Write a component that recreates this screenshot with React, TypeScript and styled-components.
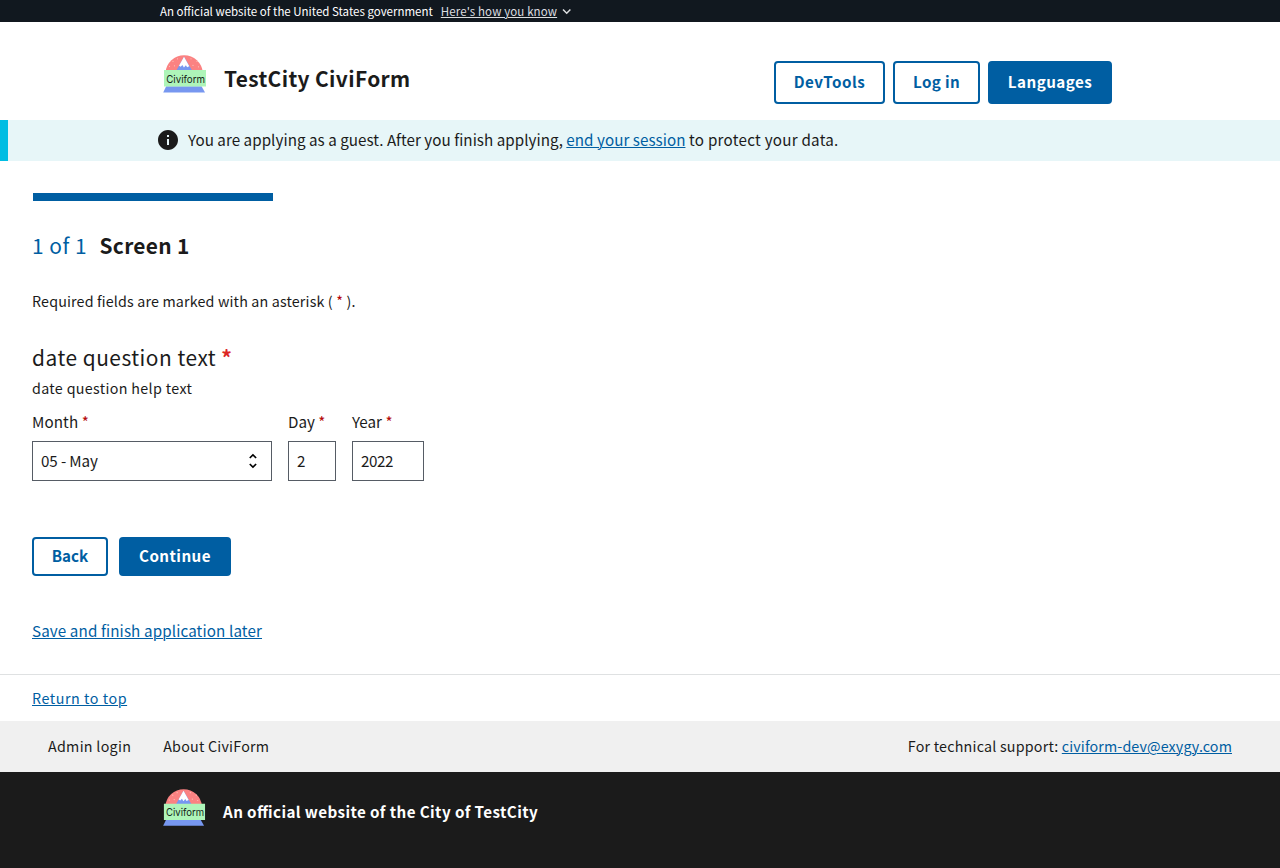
import React from "react";
import styled, { createGlobalStyle } from "styled-components";

const colors = {
  ink: "#1b1b1b",
  primary: "#005ea2",
  banner: "#11181f",
  info: "#e7f6f8",
  infoBar: "#00bde3",
  required: "#b50909",
  requiredBright: "#dc2626",
  inputBorder: "#565c65",
};

const GlobalStyle = createGlobalStyle`
  *, *::before, *::after { box-sizing: border-box; }
  body {
    margin: 0;
    background: #fff;
    color: ${colors.ink};
    font-family: "Noto Sans CJK SC", "Noto Sans", sans-serif;
    font-size: 15.2px;
    line-height: 20px;
    font-feature-settings: "liga" 1;
  }
  a { color: ${colors.primary}; text-underline-offset: 1px; text-decoration-thickness: 1px; }
`;

const Page = styled.div`
  display: flex;
  flex-direction: column;
  min-height: 868px;
`;

const Phrase = styled.span<{ $size?: number; $spacing?: number; $bold?: boolean }>`
  display: inline-block;
  vertical-align: top;
  font-size: ${(p) => p.$size ?? 15.2}px;
  letter-spacing: ${(p) => p.$spacing ?? 0}px;
  font-weight: ${(p) => (p.$bold ? 700 : 400)};
  white-space: pre;
`;

const Tracked = styled.span<{ $spacing: number }>`
  letter-spacing: ${(p) => p.$spacing}px;
`;

const GovBanner = styled.div`
  display: flex;
  align-items: center;
  gap: 8px;
  height: 22px;
  padding: 0 0 1px 160px;
  background: ${colors.banner};
  color: #fff;
`;

const BannerToggle = styled.span`
  display: flex;
  align-items: center;
  gap: 4px;
  color: #dcdee0;
  u { text-underline-offset: 1px; text-decoration-thickness: 1px; }
  svg { margin-top: 2px; }
`;

const Header = styled.header`
  display: flex;
  height: 98px;
  padding: 32px 168px 0 160px;
`;

const Brand = styled.div`
  display: flex;
  gap: 16px;
  flex: 1;
`;

const SiteTitle = styled.div`
  padding-top: 9px;
  line-height: 30px;
`;

const HeaderNav = styled.nav`
  display: flex;
  gap: 8px;
  padding-top: 7px;
`;

const Button = styled.button<{ $filled?: boolean; $width: number; $height: number }>`
  width: ${(p) => p.$width}px;
  height: ${(p) => p.$height}px;
  padding: 0 0 3px;
  border: 2px solid ${colors.primary};
  border-radius: 4px;
  background: ${(p) => (p.$filled ? colors.primary : "#fff")};
  color: ${(p) => (p.$filled ? "#fff" : colors.primary)};
  font-family: inherit;
  line-height: 20px;
`;

const Alert = styled.div`
  display: flex;
  align-items: center;
  gap: 8px;
  height: 41px;
  padding: 0 0 1px 148px;
  border-left: 8px solid ${colors.infoBar};
  background: ${colors.info};
`;

const AlertText = styled.div`
  margin-bottom: 2px;
`;

const Main = styled.main`
  height: 513px;
  padding: 32px 32px 0;
`;

const Progress = styled.div`
  width: 240px;
  height: 8px;
  margin-left: 1px;
  background: ${colors.primary};
`;

const StepHeading = styled.h1`
  display: flex;
  gap: 12.5px;
  margin: 29px 0 0;
  line-height: 30px;
`;

const StepCount = styled.span`
  color: ${colors.primary};
`;

const Note = styled.p`
  margin: 31px 0 0;
`;

const Star = styled.span<{ $bright?: boolean; $bold?: boolean }>`
  color: ${(p) => (p.$bright ? colors.requiredBright : colors.required)};
  font-weight: ${(p) => (p.$bold ? 700 : 400)};
`;

const Question = styled.h2`
  margin: 31px 0 0;
  line-height: 30px;
  font-weight: 400;
`;

const Help = styled.p`
  margin: 6px 0 0;
`;

const DateRow = styled.div`
  display: flex;
  gap: 16px;
  margin-top: 13px;
`;

const Field = styled.label<{ $width: number }>`
  display: flex;
  flex-direction: column;
  gap: 10px;
  width: ${(p) => p.$width}px;
`;

const Control = styled.span`
  display: flex;
  align-items: flex-start;
  justify-content: space-between;
  height: 40px;
  padding: 8px 6px 0 8px;
  border: 1px solid ${colors.inputBorder};
  svg { margin-top: 1px; }
`;

const Actions = styled.div`
  display: flex;
  gap: 11px;
  margin: 56px 0 44px;
`;

const TopLink = styled.div`
  height: 47px;
  padding: 13px 32px 0;
  border-top: 1px solid #dfe1e2;
`;

const FooterNav = styled.nav`
  display: flex;
  gap: 32px;
  height: 51px;
  padding: 15px 48px 0;
  background: #f0f0f0;
`;

const Support = styled.div`
  margin-left: auto;
`;

const Identifier = styled.footer`
  display: flex;
  gap: 16px;
  flex: 1;
  padding: 16px 0 0 160px;
  background: ${colors.ink};
  color: #fff;
`;

const IdentifierText = styled.div`
  padding-top: 13px;
`;

function Logo({ size }: { size: number }) {
  return (
    <svg width={size} height={size} viewBox="0 0.700 48 48" aria-hidden="true">
      <path d="M5.500 19.200a18.700 18.700 0 0 1 37.300 0z" fill="#fb8282" />
      <g fill="#fbc5ba">
        <circle cx="9.500" cy="13" r=".6" />
        <circle cx="13" cy="8" r=".6" />
        <circle cx="17.500" cy="5.500" r=".6" />
        <circle cx="14.500" cy="12.500" r=".6" />
        <circle cx="31" cy="5.500" r=".6" />
        <circle cx="33" cy="12" r=".6" />
        <circle cx="37" cy="8" r=".6" />
        <circle cx="38.500" cy="13.500" r=".6" />
      </g>
      <path d="M24 3.400 32 17H16.500z" fill="#7797f0" />
      <path d="M24 3.400 19 12.500l1.700 1 1.700-1.700 1.500 2.400 2-2.300 1.200 2 2.200-1z" fill="#fff" />
      <path d="M6.200 33h35.300l3.500 6.200H3.200z" fill="#7797f0" />
      <path d="M4 16.700h42v16.600H4z" fill="#aef5b9" />
      <text
        x="6.200"
        y="29.400"
        fontFamily="Inter, sans-serif"
        fontSize="10.800"
        textLength="38.800"
        lengthAdjust="spacingAndGlyphs"
        fill="#17251b"
      >
        Civiform
      </text>
    </svg>
  );
}

function InfoIcon() {
  return (
    <svg width="24" height="24" viewBox="0 0 24 24" fill={colors.ink} aria-hidden="true">
      <path d="M12 2C6.48 2 2 6.48 2 12s4.48 10 10 10 10-4.48 10-10S17.52 2 12 2zm1 15h-2v-6h2v6zm0-8h-2V7h2v2z" />
    </svg>
  );
}

function ChevronDown() {
  return (
    <svg width="11" height="11" viewBox="0 0 11 11" aria-hidden="true">
      <path d="M2 3.500 5.700 7.200 9.400 3.500" fill="none" stroke="#dcdee0" strokeWidth="1.500" />
    </svg>
  );
}

function UnfoldIcon() {
  return (
    <svg width="24" height="20" viewBox="0 2 24 20" aria-hidden="true">
      <path
        d="M12 5.830 15.170 9l1.410-1.410L12 3 7.410 7.590 8.830 9 12 5.830zm0 12.340L8.830 15l-1.410 1.410L12 21l4.590-4.590L15.170 15 12 18.170z"
        transform="translate(2.100 2.400) scale(.82 .8)"
      />
    </svg>
  );
}

export default function App() {
  return (
    <Page>
      <GlobalStyle />
      <GovBanner>
        <Phrase $size={11.5}>An official website of the United States government</Phrase>
        <BannerToggle>
          <Phrase $size={11.5} $spacing={0.12}><u>Here's how you know</u></Phrase>
          <ChevronDown />
        </BannerToggle>
      </GovBanner>
      <Header>
        <Brand>
          <Logo size={48} />
          <SiteTitle><Phrase $size={20.9} $spacing={0.37} $bold>TestCity CiviForm</Phrase></SiteTitle>
        </Brand>
        <HeaderNav>
          <Button $width={111} $height={43}><Phrase $spacing={0.5} $bold>DevTools</Phrase></Button>
          <Button $width={87} $height={43}><Phrase $spacing={0.35} $bold>Log in</Phrase></Button>
          <Button $width={124} $height={43} $filled><Phrase $spacing={0.45} $bold>Languages</Phrase></Button>
        </HeaderNav>
      </Header>
      <Alert>
        <InfoIcon />
        <AlertText>
          <Phrase $spacing={0.04}>
            You are applying as a guest. After you finish applying, <a href="#end">end your session</a>
            <Tracked $spacing={0.25}> to protect your data.</Tracked>
          </Phrase>
        </AlertText>
      </Alert>
      <Main>
        <Progress />
        <StepHeading>
          <StepCount><Phrase $size={20.9} $spacing={0.5}>1 of 1</Phrase></StepCount>
          <Phrase $size={20.9} $spacing={0.3} $bold>Screen 1</Phrase>
        </StepHeading>
        <Note>
          <Phrase $size={14.3} $spacing={0.15}>Required fields are marked with an asterisk ( <Star>*</Star> ).</Phrase>
        </Note>
        <Question>
          <Phrase $size={20.9} $spacing={0.5}>date question text <Star $bright $bold>*</Star></Phrase>
        </Question>
        <Help><Phrase $size={14.3} $spacing={0.33}>date question help text</Phrase></Help>
        <DateRow>
          <Field $width={240}>
            <Phrase $spacing={0.1}>Month <Star>*</Star></Phrase>
            <Control><Phrase $spacing={-0.12}>05 - May</Phrase><UnfoldIcon /></Control>
          </Field>
          <Field $width={48}>
            <Phrase>Day <Star>*</Star></Phrase>
            <Control><Phrase>2</Phrase></Control>
          </Field>
          <Field $width={72}>
            <Phrase>Year <Star>*</Star></Phrase>
            <Control><Phrase $spacing={-0.4}>2022</Phrase></Control>
          </Field>
        </DateRow>
        <Actions>
          <Button $width={76} $height={39}><Phrase $bold>Back</Phrase></Button>
          <Button $width={112} $height={39} $filled><Phrase $spacing={0.45} $bold>Continue</Phrase></Button>
        </Actions>
        <Phrase $spacing={0.12}><a href="#later">Save and finish application later</a></Phrase>
      </Main>
      <TopLink><Phrase $size={14.3} $spacing={0.55}><a href="#top">Return to top</a></Phrase></TopLink>
      <FooterNav>
        <Phrase $size={14.3} $spacing={0.28}>Admin login</Phrase>
        <Phrase $size={14.3} $spacing={0.22}>About CiviForm</Phrase>
        <Support>
          <Phrase $size={14.3} $spacing={0.12}>
            <Tracked $spacing={0.2}>For technical support: </Tracked>
            <a href="#mail">civiform-dev@exygy.com</a>
          </Phrase>
        </Support>
      </FooterNav>
      <Identifier>
        <Logo size={47} />
        <IdentifierText><Phrase $spacing={0.4} $bold>An official website of the City of TestCity</Phrase></IdentifierText>
      </Identifier>
    </Page>
  );
}
